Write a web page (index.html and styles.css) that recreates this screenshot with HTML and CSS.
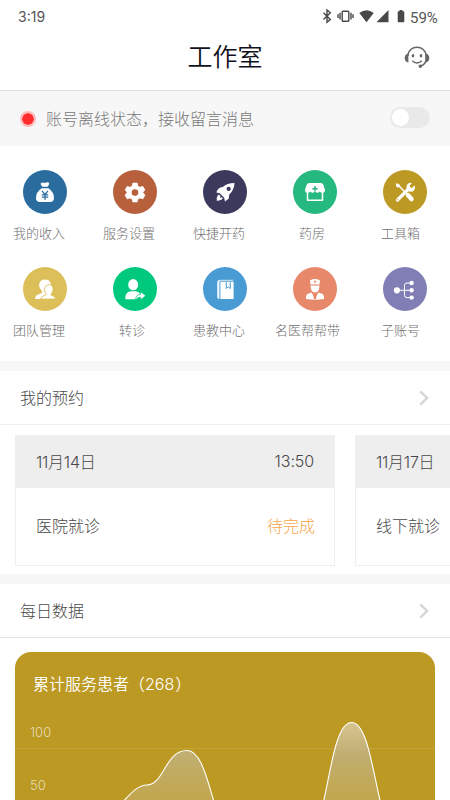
FILE: index.html
```html
<!DOCTYPE html>
<html lang="zh-CN">
<head>
<meta charset="utf-8">
<meta name="viewport" content="width=device-width, initial-scale=1">
<title>工作室</title>
<link rel="stylesheet" href="styles.css">
</head>
<body>
<div class="statusbar">
  <span class="time">3:19</span>
  <svg class="status-icons" width="84" height="16" viewBox="0 0 84 16">
    <path d="M1.5 4.7l6.8 6.7L5 14.2V2l3.3 2.8-6.8 6.6" fill="none" stroke="#484848" stroke-width="1.4"/>
    <g fill="none" stroke="#484848" stroke-width="1.4"><rect x="20.2" y="3.2" width="6.6" height="10" rx=".8"/><path d="M18 4.8v6.8M29 4.8v6.8M16 6.3v3.8M31 6.3v3.8"/></g>
    <path d="M37.3 5Q44.5-.4 51.7 5L44.5 14.2zM54.5 14.2h12V2zM75.5 3.2h2V2h3v1.2h1q.8 0 .8.8v9.4q0 .8-.8.8h-5q-.8 0-.8-.8V4q0-.8.8-.8z" fill="#484848"/>
  </svg>
  <span class="battery">59%</span>
</div>
<header class="header">
  <h1>工作室</h1>
  <svg class="service" width="26" height="24" viewBox="0 0 26 24">
    <path d="M4 10C4-1.6 22-1.6 22 10v4.5q-1 4.2-5.6 5.6" fill="none" stroke="#666" stroke-width="1.5"/>
    <path d="M4.4 7.5v9Q.7 15.7.7 12t3.7-4.5zM21.6 7.5v9q3.7-.8 3.7-4.5t-3.7-4.5z" fill="#666"/>
    <path d="M8.2 14.8q4.800 4.200 9.600 0" fill="none" stroke="#666" stroke-width="1.4"/>
    <ellipse cx="9" cy="9.7" rx="1.3" ry="1.7" fill="#666"/><ellipse cx="17" cy="9.7" rx="1.3" ry="1.7" fill="#666"/>
    <circle cx="16.3" cy="20.3" r="1.7" fill="#666"/>
  </svg>
</header>
<div class="notice">
  <i class="dot"></i><span>账号离线状态，接收留言消息</span><i class="switch"></i>
</div>
<nav class="menu">
  <a class="item"><svg class="icon blue" viewBox="0 0 44 44">
    <path d="M18 13q2-1 4 0 2.500-1.300 4.200 0 .4 1-1.600 3.700h-5.200Q17 13.800 18 13zM18.600 18.200h6.800Q31 22 31 28q0 4-4 4H17q-4 0-4-4 0-6 5.600-9.800z" fill="#fff"/>
    <path d="M19 20.800l3 3.700 3-3.700M18.800 24.800h6.400M18.800 27.200h6.400M22 24.500V30" fill="none" stroke="#2b6c9f" stroke-width="1.2"/></svg><span>我的收入</span></a>
  <a class="item"><svg class="icon rust" viewBox="0 0 44 44">
    <path d="M19.800 13h4.400l.7 3 2 1.200 2.900-.9 2.200 3.800-2.200 2.100 2.200 3-2.200 3.700-2.900-.9-2 1.200-.7 2.800h-4.400l-.7-2.800-2-1.200-2.900.9-2.200-3.700 2.200-3-2.200-2.100 2.200-3.800 2.900.9 2-1.200z" fill="#fff" stroke="#fff" stroke-width=".6" stroke-linejoin="round"/>
    <circle cx="22" cy="22.600" r="3.3" fill="#b8603c"/></svg><span>服务设置</span></a>
  <a class="item"><svg class="icon navy" viewBox="0 0 44 44">
    <path d="M31.500 13q-.2 7-5.200 11.500l-.6 4.200-3.800 2.700-.7-3.700-4.400-4.400-3.400-.8q1-5 6.400-5.600Q24 13.200 31.500 13z" fill="#fff"/>
    <circle cx="25.700" cy="18.900" r="2.1" fill="#3b3a5c"/>
    <path d="M16 24.500l-1.300 1q-1.300 2-.9 5.200 3 .2 5-1.100l1.100-1.500-1.400-.8-1.500.6.4-2z" fill="#fff"/></svg><span>快捷开药</span></a>
  <a class="item"><svg class="icon green" viewBox="0 0 44 44">
    <path d="M16 13h12q2 0 2.800 2.800l1.200 4.300q0 2.800-2.500 2.800-2 0-2.700-1.400-2.400 2.700-4.800 0-2.400 2.700-4.800 0-.7 1.400-2.700 1.400-2.500 0-2.500-2.800l1.200-4.300Q14 13 16 13z" fill="#fff"/>
    <path d="M14.500 22v8.200h15V22" fill="none" stroke="#fff" stroke-width="1.5" stroke-linejoin="round"/>
    <path d="M22 16v5.400M19.300 18.700h5.400" stroke="#25b87f" stroke-width="1.5"/></svg><span>药房</span></a>
  <a class="item"><svg class="icon gold" viewBox="0 0 44 44">
    <path d="M14.500 30L25 19.500" stroke="#fff" stroke-width="3.2" stroke-linecap="round"/>
    <path d="M28.900 12.900q-4.400-.5-5.400 3.500-.6 4.300 3.200 5.200 5 .7 5.400-4.600l-.4-1.600-3.200 2.900-2.100-2.200z" fill="#fff"/>
    <path d="M15.100 15l9.200 9.500" stroke="#fff" stroke-width="1.6"/><path d="M13 13.200l3.100.7.8 2.100-1.900 1.700-1.900-1.300z" fill="#fff"/>
    <path d="M25 25.200l3.500 3.800" stroke="#fff" stroke-width="4.5" stroke-linecap="round"/><circle cx="14.900" cy="29.600" r=".6" fill="#bc9923"/></svg><span>工具箱</span></a>
  <a class="item"><svg class="icon sand" viewBox="0 0 44 44">
    <path d="M22.200 12.400c4 0 6.200 3 5.800 7q-.4 4-3 6.500l3 6H12.200q-.6-3.500 4-5 3.800-1 2.800-3Q16 21.500 16 18q.4-5.600 6.200-5.600z" fill="#fff"/>
    <path d="M26.200 17.700c-3 0-4.800 2.200-4.800 5q.1 2.800 1.800 4.500-.2 1-2.700 1.700-2.700.8-2.700 3.200H32.500q0-2.600-2.800-3.300-2.200-.8-1.800-1.600 2-2 2.200-4.500 0-5-3.900-5z" fill="#fff" stroke="#ddbf5a" stroke-width=".9"/></svg><span>团队管理</span></a>
  <a class="item"><svg class="icon lime" viewBox="0 0 44 44">
    <ellipse cx="20.200" cy="17.700" rx="5" ry="5.6" fill="#fff"/>
    <path d="M12.200 32.200q0-8 6.300-8h4q3.300 0 4.700 2.500l-3.300 5.500z" fill="#fff"/>
    <path d="M22.500 32.700q.4-5 5-5.200v-3l5.200 4.300-5.200 4v-2.500q-3-.2-5 2.400z" fill="#fff" stroke="#00c97e" stroke-width=".7"/></svg><span>转诊</span></a>
  <a class="item"><svg class="icon sky" viewBox="0 0 44 44">
    <path d="M16.400 14.800h14.200V32H16.400q-2 0-2-2V15q0-2 2-2" fill="#fff"/>
    <path d="M14.800 15.500v14.600q0 1.400 1.500 1.400M15 15q0-1.700 2-1.700h13.200" fill="none" stroke="#d9ecf8" stroke-width="1"/>
    <path d="M16.900 15v17M23.300 15.200v6.300l2-1.700 2 1.700v-6.300" fill="none" stroke="#499cd3" stroke-width="1"/></svg><span>患教中心</span></a>
  <a class="item"><svg class="icon coral" viewBox="0 0 44 44">
    <path d="M17 13.400q5-2.600 10 0l-.6 4.300h-8.800zM17.500 18.200h9q-.1 7.200-4.500 7.400-4.400-.2-4.500-7.400zM18.700 25.600L22 32.500l3.300-6.900q5.500 1 5.700 4.300v2.200q-9 1.200-18 0v-2.200q.2-3.300 5.700-4.300z" fill="#fff"/>
    <path d="M22 13.300v3M20.500 14.800h3M17.700 18h8.600" stroke="#e8886a" stroke-width=".8"/><path d="M21.200 27h1.600l.6 4.300-1.400 1.200-1.400-1.200z" fill="#e8886a"/></svg><span>名医帮帮带</span></a>
  <a class="item"><svg class="icon violet" viewBox="0 0 44 44">
    <path d="M14 23.300h13M28 16h-4q-2.500 0-2.500 2.200v10.200q0 2.200 2.500 2.200h4" fill="none" stroke="#fff" stroke-width="1"/>
    <g fill="#fff"><circle cx="13.900" cy="23.300" r="3.1"/><circle cx="28.600" cy="16" r="2.2"/><circle cx="28.600" cy="23.300" r="2.2"/><circle cx="28.600" cy="30.600" r="2.2"/></g></svg><span>子账号</span></a>
</nav>
<section class="section appointments">
  <div class="section-head"><h2>我的预约</h2><svg width="10" height="16" viewBox="0 0 10 16"><path d="M1.300 1.300L8 8l-6.700 6.700" fill="none" stroke="#d5d5d9" stroke-width="2.4"/></svg></div>
  <div class="cards">
    <article class="card"><div class="card-head"><span>11月14日</span><span class="hour">13:50</span></div><div class="card-body"><span>医院就诊</span><span class="pending">待完成</span></div></article>
    <article class="card"><div class="card-head"><span>11月17日</span></div><div class="card-body"><span>线下就诊</span></div></article>
  </div>
</section>
<section class="section daily">
  <div class="section-head"><h2>每日数据</h2><svg width="10" height="16" viewBox="0 0 10 16"><path d="M1.300 1.300L8 8l-6.700 6.700" fill="none" stroke="#d5d5d9" stroke-width="2.4"/></svg></div>
  <div class="chart">
    <h3>累计服务患者（<span>268</span>）</h3>
    <svg class="plot" width="420" height="90" viewBox="0 0 420 90">
      <defs><linearGradient id="area" gradientUnits="userSpaceOnUse" x1="0" y1="10" x2="0" y2="130"><stop offset="0" stop-color="#dccfa7" stop-opacity=".85"/><stop offset=".27" stop-color="#c1b17c" stop-opacity=".9"/><stop offset="1" stop-color="#c8ad55" stop-opacity=".4"/></linearGradient></defs>
      <path d="M0 38.500h420" stroke="#fff" stroke-opacity=".1"/>
      <path d="M105 95C117 82 123 75 132 75C149 75 150 40.500 172 40.500C187 40.500 193 74 201 98M307 98C315 68 320 12.500 336.500 12.500C353 12.500 358 65 367 98" fill="url(#area)" stroke="#fff" stroke-width="1.1"/>
      <text x="15" y="27">100</text><text x="15" y="80">50</text>
    </svg>
  </div>
</section>
</body>
</html>
```

FILE: styles.css
```css
* { box-sizing: border-box; }
html, body { height: 100%; overflow: hidden; }
body { margin: 0; background: #fff; color: #484848; font-family: Inter, "Noto Sans CJK SC", sans-serif; font-weight: 300; font-size: 16px; }
h1, h2, h3 { margin: 0; font-weight: 300; }
svg { display: block; flex: none; }

.statusbar { height: 34px; display: flex; align-items: center; padding: 0 10px 0 18px; font-size: 14px; color: #555; font-weight: 400; }
.time { flex: 1; margin-top: -1px; }
.status-icons { margin: -2px 4px 0 0; }
.battery { font-family: Roboto, sans-serif; width: 30px; font-size: 15px; padding-top: 2px; }

.header { height: 57px; border-bottom: 1px solid #e2e2e2; display: grid; grid-template-columns: 1fr auto 1fr; align-items: center; padding: 0 20px 10px; }
.header h1 { grid-column: 2; font-size: 25px; line-height: 36px; color: #101020; font-weight: 350; }
.service { justify-self: end; margin-top: 2px; }

.notice { height: 55px; background: #f7f7f7; display: flex; align-items: center; padding: 0 20px; color: #777; }
.notice span { flex: 1; margin-left: 10px; line-height: 24px; padding-top: 1px; }
.dot { width: 16px; height: 16px; border-radius: 50%; border: 2px solid #fbb; background: #ff2d2d; background-clip: padding-box; }
.switch { width: 40px; height: 21px; margin-top: -2px; border-radius: 11px; background: #e9e9e9; padding: 2px; }
.switch::before { content: ""; display: block; width: 17px; height: 17px; border-radius: 50%; background: #fff; }

.menu { height: 215px; display: grid; grid-template-columns: repeat(5, 90px); grid-auto-rows: 97px; padding-top: 24px; }
.item { display: flex; flex-direction: column; align-items: center; }
.item span { margin-top: 7px; line-height: 24px; white-space: nowrap; color: #707070; transform: scale(.8125); transform-origin: left center; }
.icon { width: 44px; height: 44px; border-radius: 50%; }
.blue { background: #2b6c9f; }
.rust { background: #b8603c; }
.navy { background: #3b3a5c; }
.green { background: #25b87f; }
.gold { background: #bc9923; }
.sand { background: #ddbf5a; }
.lime { background: #00c97e; }
.sky { background: #499cd3; }
.coral { background: #e8886a; }
.violet { background: #807eb4; }

.section { border-top: 10px solid #f7f7f7; }
.section-head { height: 54px; display: flex; align-items: center; justify-content: space-between; padding: 0 21px 0 20px; border-bottom: 1px solid #efefef; }
.section-head h2 { font-size: 16px; line-height: 24px; }
.daily .section-head { border-color: #e2e2e2; }
.appointments { height: 213px; }
.cards { display: flex; gap: 20px; padding: 10px 15px 0; overflow: hidden; }
.card { width: 320px; height: 131px; flex: none; border: 1px solid #efefef; }
.card-head, .card-body { display: flex; align-items: center; justify-content: space-between; padding: 0 20px 3px; }
.card-head { height: 52px; background: #eee; letter-spacing: -.25px; }
.card-head .hour { letter-spacing: -.1px; }
.card-body { height: 77px; padding-right: 19px; }
.pending { color: #f5a647; }

.chart { margin: 14px 15px 0; height: 148px; overflow: hidden; border-radius: 16px 16px 0 0; background: #bc9923; color: #fff; }
.chart h3 { font-size: 16px; line-height: 24px; padding: 20px 18px 0; height: 58px; font-weight: 350; }
.chart h3 span { margin-right: 1px; }
.plot text { font-size: 13px; fill: #fff; fill-opacity: .65; }
```
